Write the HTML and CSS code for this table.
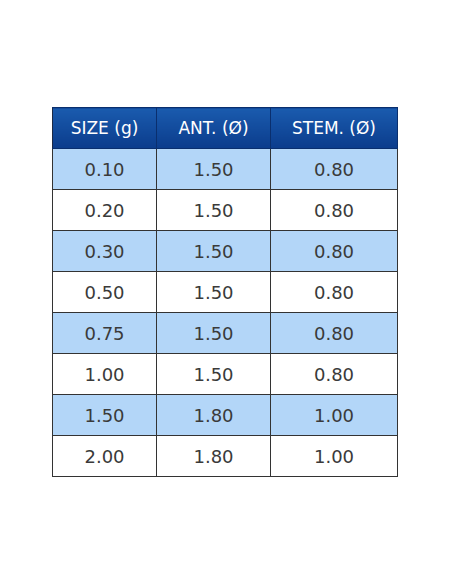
FILE: index.html
```html
<!DOCTYPE html>
<html lang="en">
<head>
    <meta charset="UTF-8">
    <title>Size table</title>
    <link rel="stylesheet" href="styles.css">
</head>
<body>
    <div class="page">
        <table class="size-table">
            <thead>
                <tr>
                    <th class="col-size">SIZE (g)</th>
                    <th class="col-ant">ANT. (Ø)</th>
                    <th class="col-stem">STEM. (Ø)</th>
                </tr>
            </thead>
            <tbody>
                <tr class="alt"><td>0.10</td><td>1.50</td><td>0.80</td></tr>
                <tr><td>0.20</td><td>1.50</td><td>0.80</td></tr>
                <tr class="alt"><td>0.30</td><td>1.50</td><td>0.80</td></tr>
                <tr><td>0.50</td><td>1.50</td><td>0.80</td></tr>
                <tr class="alt"><td>0.75</td><td>1.50</td><td>0.80</td></tr>
                <tr><td>1.00</td><td>1.50</td><td>0.80</td></tr>
                <tr class="alt"><td>1.50</td><td>1.80</td><td>1.00</td></tr>
                <tr><td>2.00</td><td>1.80</td><td>1.00</td></tr>
            </tbody>
        </table>
    </div>
</body>
</html>
```

FILE: styles.css
```css
body {
    margin: 0;
    background: #fff;
    font-family: "DejaVu Sans", "Liberation Sans", sans-serif;
    color: #333;
}
.page {
    padding: 107px 0 0 52px;
}
.size-table {
    border-collapse: collapse;
    table-layout: fixed;
    width: 342px;
}
.col-size {
    width: 103px;
}
.col-ant {
    width: 113px;
}
.col-stem {
    width: 126px;
}
.size-table th,
.size-table td {
    border: 1px solid #333;
    text-align: center;
    padding: 0;
    height: 40px;
}
.size-table th {
    background: linear-gradient(#1a5bae, #0b3c8c);
    color: #fff;
    font-weight: normal;
    font-size: 17px;
    border-color: #0a2f6e;
    border-left-color: #1d2a44;
}
.size-table td {
    font-size: 18px;
    color: #3a3a3a;
    background: #fff;
}
.size-table tr.alt td {
    background: #b3d6f8;
}
```
